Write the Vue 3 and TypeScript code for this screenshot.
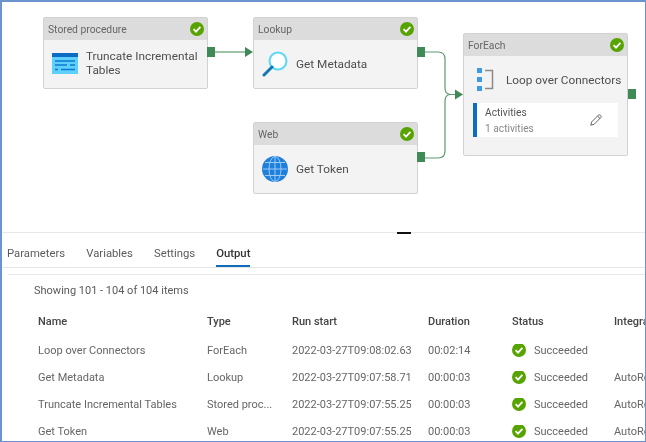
<script setup lang="ts">
interface Row {
  name: string
  type: string
  start: string
  duration: string
  runtime: string
}

const tabs = ["Parameters", "Variables", "Settings", "Output"]

const rows: Row[] = [
  {name: "Loop over Connectors", type: "ForEach", start: "2022-03-27T09:08:02.639Z", duration: "00:02:14", runtime: ""},
  {name: "Get Metadata", type: "Lookup", start: "2022-03-27T09:07:58.710Z", duration: "00:00:03", runtime: "AutoResolve"},
  {name: "Truncate Incremental Tables", type: "Stored proc...", start: "2022-03-27T09:07:55.258Z", duration: "00:00:03", runtime: "AutoResolve"},
  {name: "Get Token", type: "Web", start: "2022-03-27T09:07:55.258Z", duration: "00:00:03", runtime: "AutoResolve"},
]
</script>

<template>
  <div class="frame">
    <section class="canvas">
      <svg class="links" width="644" height="230" viewBox="0 0 644 230">
        <g fill="none" stroke="#5c9a70" stroke-width="1.2">
          <path d="M213 50H244" />
          <path d="M423 50H436Q443 50 443 57V86Q443 92.500 449 92.500H454" />
          <path d="M423 156H436Q443 156 443 149V99Q443 92.500 449 92.500" />
        </g>
        <path d="M243 45L251 50L243 55Z" fill="#3f8a57" />
        <path d="M453 87.500L461 92.500L453 97.500Z" fill="#3f8a57" />
      </svg>

      <div class="node n-sp">
        <div class="node-head">
          <span>Stored procedure</span>
          <svg class="check" viewBox="0 0 14 14"><circle cx="7" cy="7" r="7" fill="#57a300" /><path d="M3.600 7.200L6 9.600L10.400 4.800" fill="none" stroke="#fff" stroke-width="1.800" /></svg>
        </div>
        <div class="node-body">
          <svg class="icon" viewBox="0 0 26 22">
            <rect y="1" width="26" height="20" fill="#5ed0fb" />
            <rect y="0" width="26" height="4" fill="#0a6cc4" />
            <path d="M3 8H23M3 12H15M18 12H23M3 16.500H6M9 16.500H23" stroke="#0a78d4" stroke-width="1.300" />
          </svg>
          <span class="node-name wrap">Truncate Incremental Tables</span>
        </div>
        <i class="port"></i>
      </div>

      <div class="node n-lookup">
        <div class="node-head">
          <span>Lookup</span>
          <svg class="check" viewBox="0 0 14 14"><circle cx="7" cy="7" r="7" fill="#57a300" /><path d="M3.600 7.200L6 9.600L10.400 4.800" fill="none" stroke="#fff" stroke-width="1.800" /></svg>
        </div>
        <div class="node-body">
          <svg class="icon" viewBox="0 0 26 26">
            <circle cx="16" cy="10" r="8.500" fill="#fff" stroke="#59d8f5" stroke-width="2" />
            <path d="M10 16L2 24" stroke="#1277b8" stroke-width="3" stroke-linecap="round" />
          </svg>
          <span class="node-name">Get Metadata</span>
        </div>
        <i class="port"></i>
      </div>

      <div class="node n-web">
        <div class="node-head">
          <span>Web</span>
          <svg class="check" viewBox="0 0 14 14"><circle cx="7" cy="7" r="7" fill="#57a300" /><path d="M3.600 7.200L6 9.600L10.400 4.800" fill="none" stroke="#fff" stroke-width="1.800" /></svg>
        </div>
        <div class="node-body">
          <svg class="icon" viewBox="0 0 26 26">
            <circle cx="13" cy="13" r="13" fill="#1f7fdc" />
            <g fill="none" stroke="#9ccbf3" stroke-width="1">
              <ellipse cx="13" cy="13" rx="6" ry="12.500" />
              <path d="M13 .5V25.500M1 13H25M3 6.500H23M3 19.500H23" />
            </g>
          </svg>
          <span class="node-name">Get Token</span>
        </div>
        <i class="port"></i>
      </div>

      <div class="node n-each">
        <div class="node-head">
          <span>ForEach</span>
          <svg class="check" viewBox="0 0 14 14"><circle cx="7" cy="7" r="7" fill="#57a300" /><path d="M3.600 7.200L6 9.600L10.400 4.800" fill="none" stroke="#fff" stroke-width="1.800" /></svg>
        </div>
        <div class="each-title">
          <svg class="each-icon" viewBox="0 0 18 23">
            <path d="M8 2.500H15.500V20.500H8" fill="none" stroke="#8a8a8a" stroke-width="1.500" />
            <rect width="5" height="5" fill="#3b9be8" />
            <rect y="9" width="5" height="5" fill="#3b9be8" />
            <rect y="18" width="5" height="5" fill="#3b9be8" />
          </svg>
          <span class="node-name">Loop over Connectors</span>
        </div>
        <div class="activities">
          <div class="act-text">
            <span class="act-label">Activities</span>
            <span class="act-count">1 activities</span>
          </div>
          <svg class="pencil" viewBox="0 0 12 12">
            <path d="M.8 11.200L1.600 8L8.400 1.200Q9.400 .4 10.400 1.200L10.800 1.600Q11.600 2.600 10.800 3.600L4 10.400ZM7.600 2L10 4.400" fill="#fff" stroke="#555" stroke-width=".9" />
          </svg>
        </div>
        <i class="port"></i>
      </div>
    </section>

    <section class="panel">
      <i class="handle"></i>
      <nav class="tabs">
        <span v-for="tab in tabs" :key="tab" class="tab" :class="{active: tab === 'Output'}">{{ tab }}</span>
      </nav>
      <div class="output">
        <div class="summary">Showing 101 - 104 of 104 items</div>
        <div class="row head">
          <span>Name</span>
          <span>Type</span>
          <span>Run start</span>
          <span>Duration</span>
          <span>Status</span>
          <span>Integration runtime</span>
        </div>
        <div v-for="row in rows" :key="row.name" class="row">
          <span>{{ row.name }}</span>
          <span>{{ row.type }}</span>
          <span>{{ row.start }}</span>
          <span>{{ row.duration }}</span>
          <span class="status">
            <svg class="check" viewBox="0 0 14 14"><circle cx="7" cy="7" r="7" fill="#57a300" /><path d="M3.600 7.200L6 9.600L10.400 4.800" fill="none" stroke="#fff" stroke-width="1.800" /></svg>
            Succeeded
          </span>
          <span>{{ row.runtime }}</span>
        </div>
      </div>
    </section>
  </div>
</template>

<style>
html, body {
  margin: 0;
  background: #fff;
}
</style>

<style scoped>
.frame {
  box-sizing: border-box;
  width: 646px;
  height: 442px;
  overflow: hidden;
  border: solid #6d93cf;
  border-width: 2px 1px 1px 2px;
  background: #fff;
  color: #555;
  font-family: Roboto, "Open Sans", sans-serif;
  font-size: 11px;
  filter: blur(0.3px);
}

.canvas {
  position: relative;
  height: 230px;
}

.links {
  position: absolute;
  left: 0;
  top: 0;
}

.node {
  position: absolute;
  box-sizing: border-box;
  width: 165px;
  background: #f3f3f3;
  border: 1px solid #d2d2d2;
  border-radius: 2px;
}

.n-sp { left: 41px; top: 15px; height: 72px; }
.n-lookup { left: 251px; top: 15px; height: 72px; }
.n-web { left: 251px; top: 120px; height: 72px; }
.n-each { left: 461px; top: 31px; height: 123px; }

.node-head {
  display: flex;
  align-items: center;
  justify-content: space-between;
  height: 22px;
  padding: 0 3px 0 4px;
  background: #dcdcdc;
  color: #666;
  font-size: 10.300px;
}

.check {
  width: 14px;
  height: 14px;
  flex: none;
}

.node-body {
  display: flex;
  align-items: center;
  gap: 8px;
  height: 48px;
  padding-left: 8px;
}

.icon {
  width: 26px;
  height: 26px;
  flex: none;
}

.node-name {
  color: #4f4f4f;
  font-size: 11.800px;
  line-height: 14px;
  white-space: nowrap;
}

.node-name.wrap {
  width: 118px;
  margin-bottom: 2px;
  white-space: normal;
}

.port {
  position: absolute;
  left: 163px;
  top: 29px;
  width: 8px;
  height: 10px;
  background: #3f8a57;
}

.n-each .port {
  left: 164px;
  top: 55px;
}

.each-title {
  display: flex;
  align-items: center;
  gap: 11px;
  height: 47px;
  padding-left: 13px;
}

.each-icon {
  width: 18px;
  height: 23px;
  flex: none;
}

.activities {
  display: flex;
  align-items: center;
  justify-content: space-between;
  box-sizing: border-box;
  width: 145px;
  height: 34px;
  margin-left: 9px;
  padding: 0 16px 0 8px;
  background: #fff;
  border-left: 4px solid #0f6cbd;
}

.act-text {
  display: flex;
  flex-direction: column;
  gap: 3px;
  font-size: 10.200px;
  line-height: 13px;
}

.act-label {
  color: #555;
}

.act-count {
  color: #888;
}

.pencil {
  width: 12px;
  height: 12px;
}

.panel {
  position: relative;
  height: 209px;
  border-top: 1px solid #e8e8e8;
}

.handle {
  position: absolute;
  left: 395px;
  top: -1px;
  width: 14px;
  height: 2px;
  background: #111;
}

.tabs {
  display: flex;
  gap: 21px;
  height: 34px;
  padding-left: 5px;
  border-bottom: 1px solid #e6e6e6;
  font-size: 11.300px;
}

.tab {
  box-sizing: border-box;
  height: 34px;
  padding-top: 14px;
  color: #5c5c5c;
}

.tab.active {
  color: #333;
  font-weight: 500;
  border-bottom: 2px solid #0f6cbd;
}

.output {
  margin: 6px 0 0 6px;
  padding-left: 26px;
  border-top: 1px solid #e8e8e8;
}

.summary {
  height: 31px;
  padding-top: 8px;
  box-sizing: border-box;
  line-height: 15px;
  color: #5a5a5a;
}

.row {
  display: grid;
  grid-template-columns: 169px 85px 136px 84px 102px 60px;
  align-items: center;
  height: 27px;
  padding-left: 4px;
  white-space: nowrap;
  color: #666;
}

.row > span {
  overflow: hidden;
}

.row > span:nth-child(3) {
  margin-right: 17px;
}

.row.head {
  height: 31px;
  color: #444;
  font-weight: 500;
}

.status {
  display: flex;
  align-items: center;
  gap: 8px;
}

.status .check {
  margin-top: -2px;
}
</style>
